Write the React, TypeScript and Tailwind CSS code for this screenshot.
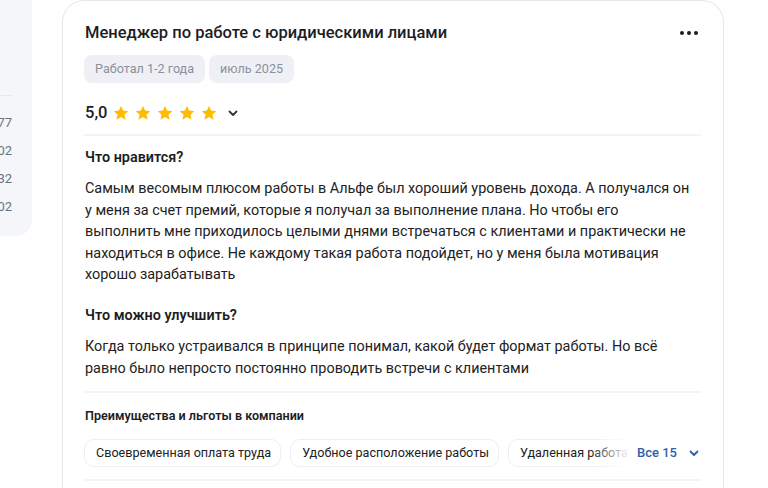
import React from 'react';

const Star = () => (
  <svg width="18" height="18" viewBox="0 0 24 24" fill="#ffbb00">
    <path d="M12 2.5l2.85 6.3 6.9.7-5.17 4.62 1.48 6.78L12 17.4l-6.06 3.5 1.48-6.78L2.25 9.5l6.9-.7L12 2.5z" />
  </svg>
);

const Chevron = ({ color = '#333' }: { color?: string }) => (
  <svg width="12" height="12" viewBox="0 0 12 12" fill="none" stroke={color} strokeWidth={1.8} strokeLinecap="round" strokeLinejoin="round">
    <path d="M2.5 4.5L6 8l3.5-3.5" />
  </svg>
);

const leftNumbers = ['77', '02', '32', '02'];
const perks = ['Своевременная оплата труда', 'Удобное расположение работы', 'Удаленная работа'];

export default function App() {
  return (
    <div className="w-[768px] h-[488px] bg-white flex items-start overflow-hidden font-['Roboto',sans-serif] text-[#1d1d1f]">
      {/* left side panel, mostly off-screen */}
      <div className="w-[32px] h-[236px] shrink-0 bg-[#f5f6fa] rounded-br-[16px] overflow-hidden flex flex-col">
        <div className="h-[95px]" />
        <div className="h-px mr-[20px] bg-[#e7e9ef]" />
        <div className="flex flex-col pt-[16px] gap-[7px]">
          {leftNumbers.map((n, i) => (
            <div key={i} className="flex justify-end pr-[20px] h-[21px] items-center text-[13px] text-[#6b7280] whitespace-nowrap">
              {n}
            </div>
          ))}
        </div>
      </div>

      {/* review card */}
      <div className="ml-[30px] w-[662px] h-[520px] shrink-0 border border-b-0 border-[#e4e7ee] rounded-t-[22px] px-[22px] pt-[20px]">
        <div className="flex items-center justify-between h-[24px]">
          <h2 className="text-[16.5px] font-medium leading-[24px]">Менеджер по работе с юридическими лицами</h2>
          <div className="flex items-center gap-[3px] pr-[3px]">
            <span className="w-[4px] h-[4px] rounded-full bg-[#1d1d1f]" />
            <span className="w-[4px] h-[4px] rounded-full bg-[#1d1d1f]" />
            <span className="w-[4px] h-[4px] rounded-full bg-[#1d1d1f]" />
          </div>
        </div>

        <div className="flex gap-[4px] mt-[10px] -ml-px">
          <span className="h-[28px] px-[11px] flex items-center rounded-[8px] bg-[#eef0f5] text-[12.6px] text-[#8b909c]">Работал 1-2 года</span>
          <span className="h-[28px] px-[11px] flex items-center rounded-[8px] bg-[#eef0f5] text-[12.6px] text-[#8b909c]">июль 2025</span>
        </div>

        <div className="flex items-center h-[24px] mt-[18px]">
          <span className="text-[16.5px] font-medium mr-[5px]">5,0</span>
          <div className="flex gap-[4px]">
            <Star />
            <Star />
            <Star />
            <Star />
            <Star />
          </div>
          <span className="ml-[9px] flex items-center">
            <Chevron />
          </span>
        </div>

        <div className="h-[2px] bg-[#f3f4f7] mt-[9px] -ml-px" />

        <h3 className="text-[14.4px] font-semibold leading-[22px] mt-[11px]">Что нравится?</h3>
        <p className="text-[14.4px] leading-[21.6px] mt-[9px] text-[#222] whitespace-nowrap">
          Самым весомым плюсом работы в Альфе был хороший уровень дохода. А получался он
          <br />у меня за счет премий, которые я получал за выполнение плана. Но чтобы его
          <br />выполнить мне приходилось целыми днями встречаться с клиентами и практически не
          <br />находиться в офисе. Не каждому такая работа подойдет, но у меня была мотивация
          <br />хорошо зарабатывать
        </p>

        <h3 className="text-[14.4px] font-semibold leading-[22px] mt-[19px]">Что можно улучшить?</h3>
        <p className="text-[14.4px] leading-[21.6px] mt-[9px] text-[#222] whitespace-nowrap">
          Когда только устраивался в принципе понимал, какой будет формат работы. Но всё
          <br />равно было непросто постоянно проводить встречи с клиентами
        </p>

        <div className="h-[2px] bg-[#f3f4f7] mt-[12px] -ml-px" />

        <h4 className="text-[12.6px] font-semibold leading-[20px] mt-[13px]">Преимущества и льготы в компании</h4>

        <div className="flex items-center mt-[13px] -ml-px">
          <div className="relative w-[546px] shrink-0 overflow-hidden">
            <div className="flex gap-[9px] whitespace-nowrap">
              {perks.map((p) => (
                <span key={p} className="h-[28px] pl-[11px] pr-[9px] flex items-center rounded-[10px] border border-[#eceef3] text-[12.6px] text-[#222] shrink-0">
                  {p}
                </span>
              ))}
            </div>
            <div className="absolute right-0 top-0 h-full w-[40px] bg-gradient-to-r from-white/0 to-white" />
          </div>
          <button className="ml-[7px] shrink-0 whitespace-nowrap flex items-center gap-[11px] text-[13px] font-medium text-[#2f5eac]">
            Все 15
            <Chevron color="#2f5eac" />
          </button>
        </div>

        <div className="h-[2px] bg-[#f3f4f7] mt-[12px] -ml-px" />
      </div>
    </div>
  );
}
